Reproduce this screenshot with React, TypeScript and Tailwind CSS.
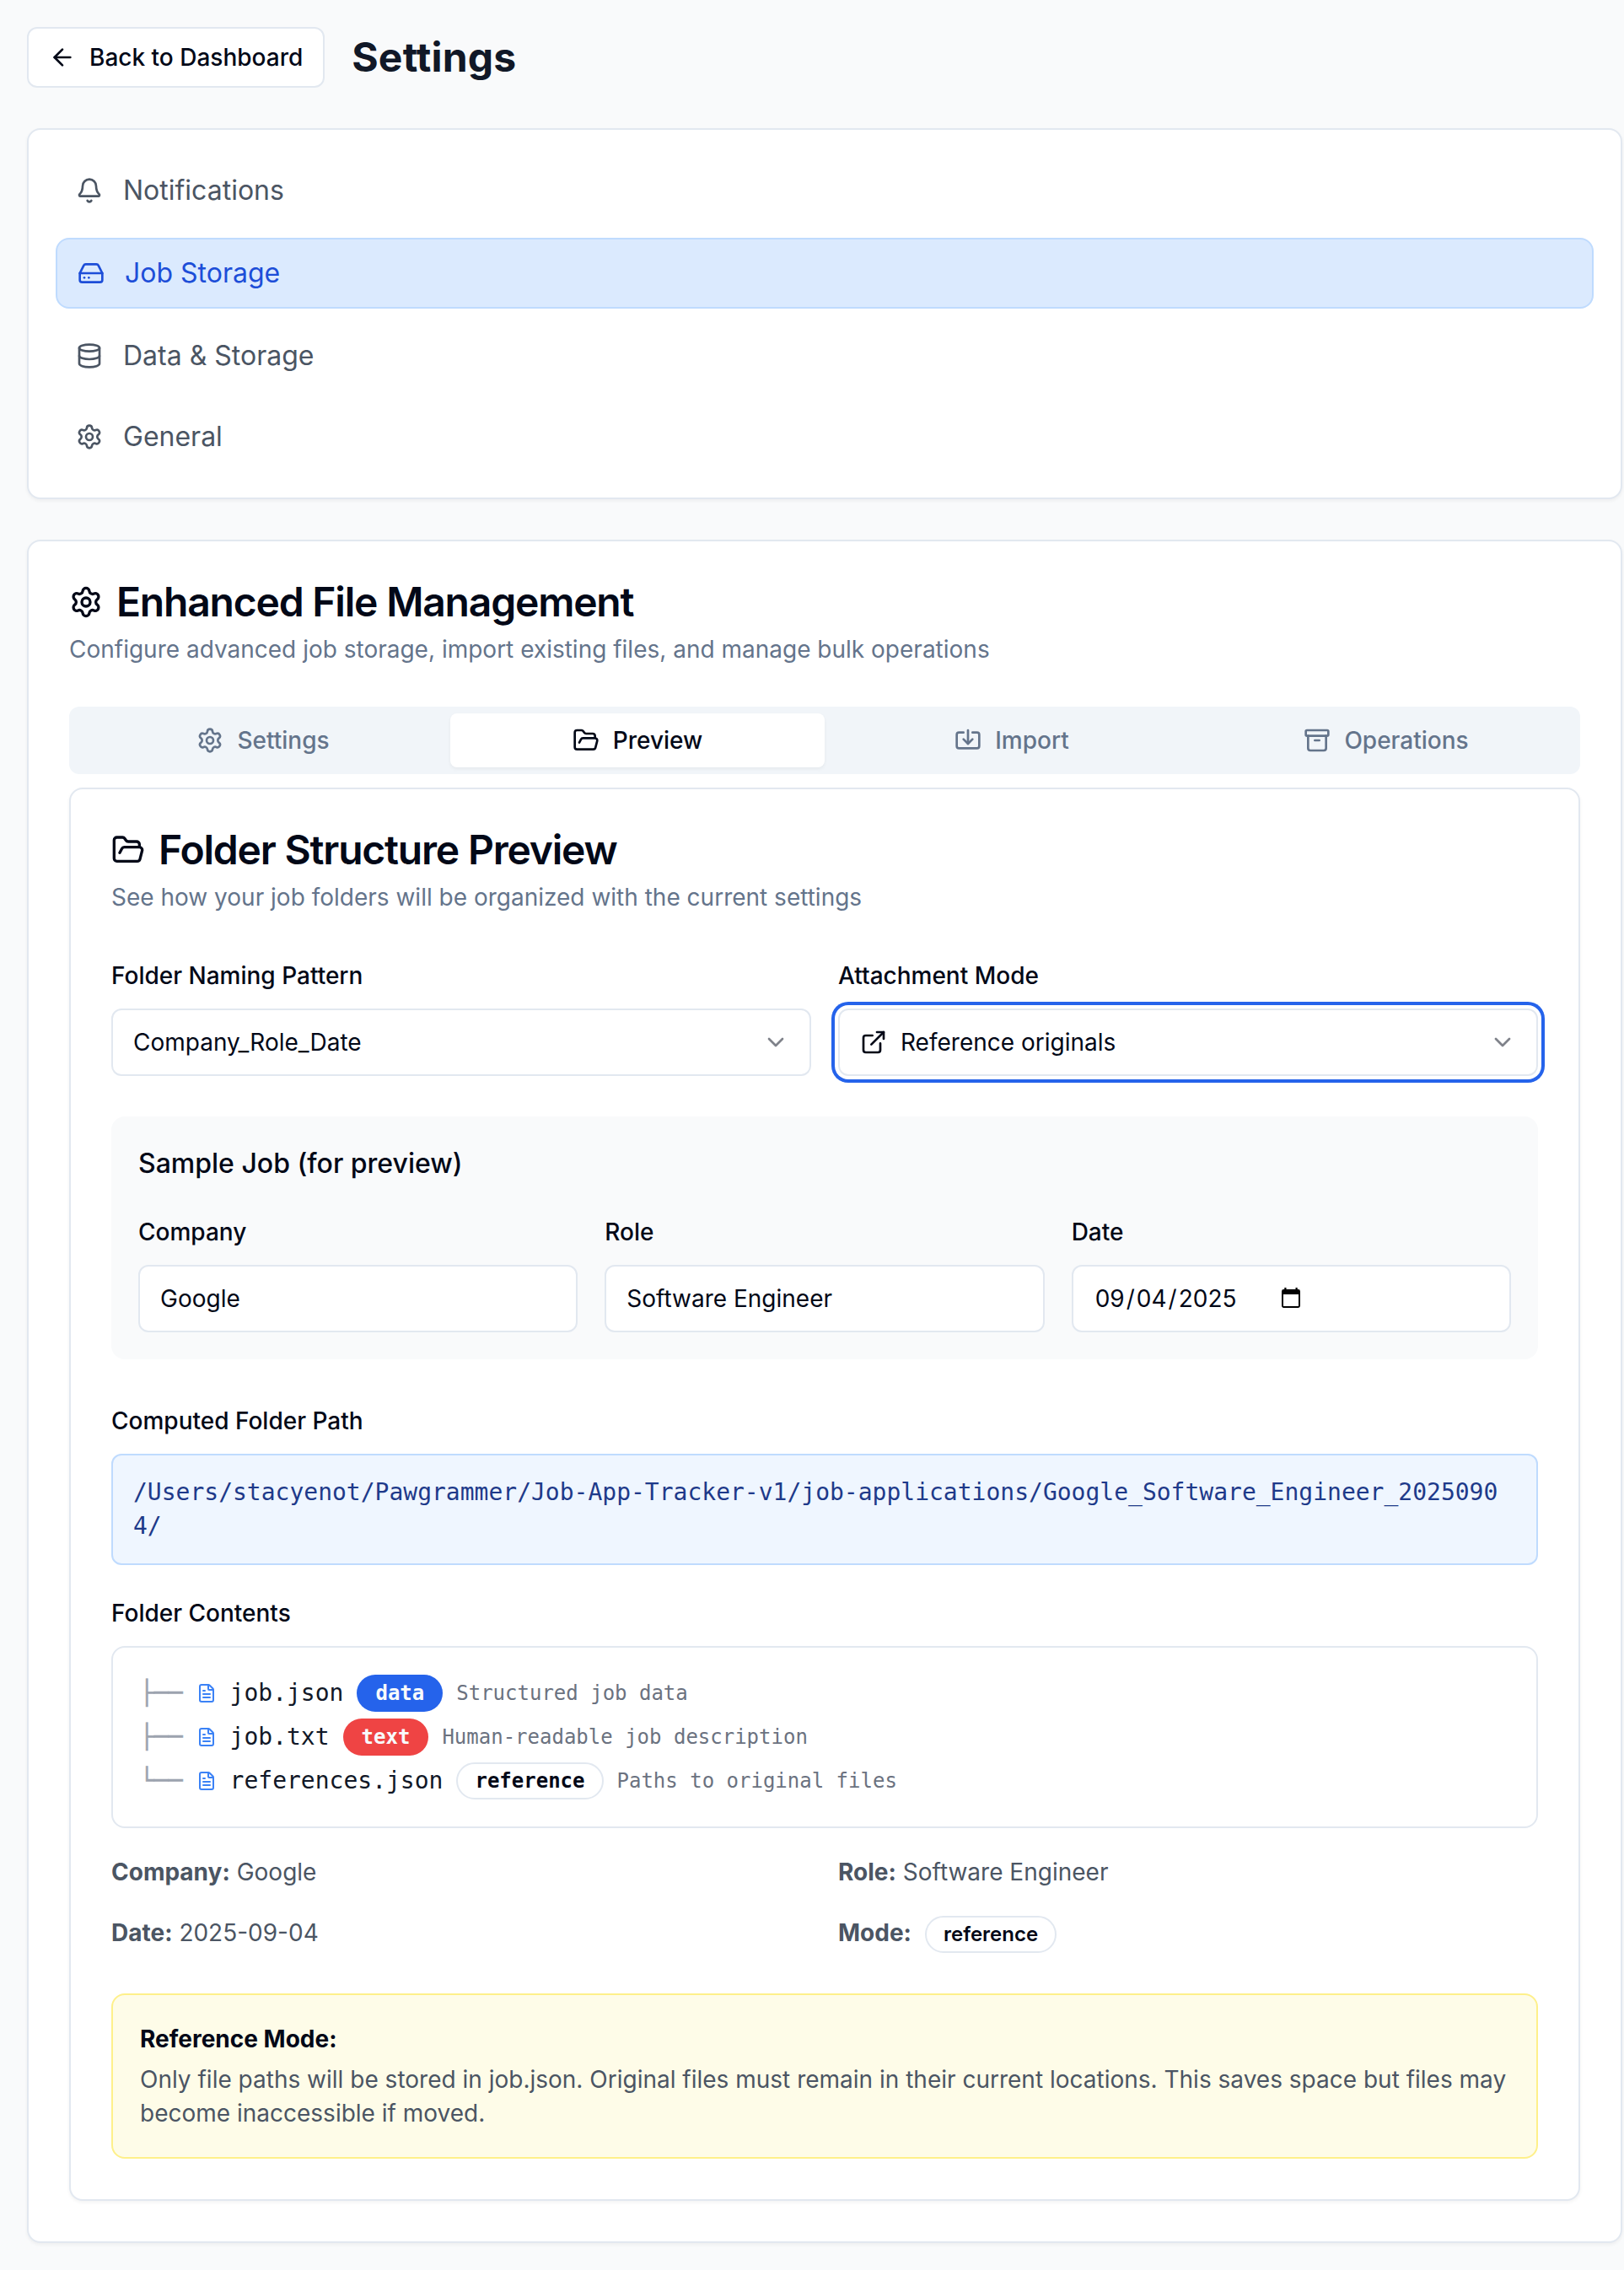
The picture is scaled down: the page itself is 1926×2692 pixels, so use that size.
import type { ReactNode } from 'react';
import {
  Archive,
  ArrowLeft,
  Bell,
  ChevronDown,
  Database,
  ExternalLink,
  FileText,
  FolderOpen,
  HardDrive,
  Import,
  Settings,
} from 'lucide-react';

const NAV = [
  { label: 'Notifications', icon: Bell },
  { label: 'Job Storage', icon: HardDrive, active: true },
  { label: 'Data & Storage', icon: Database },
  { label: 'General', icon: Settings },
];

const TABS = [
  { label: 'Settings', icon: Settings },
  { label: 'Preview', icon: FolderOpen, active: true },
  { label: 'Import', icon: Import },
  { label: 'Operations', icon: Archive },
];

const FILES = [
  {
    branch: '├──',
    name: 'job.json',
    tag: 'data',
    tagClass: 'border-transparent bg-[#2563eb] text-[#f8fafc]',
    note: 'Structured job data',
  },
  {
    branch: '├──',
    name: 'job.txt',
    tag: 'text',
    tagClass: 'border-transparent bg-[#ef4444] text-[#f8fafc]',
    note: 'Human-readable job description',
  },
  {
    branch: '└──',
    name: 'references.json',
    tag: 'reference',
    tagClass: 'border-[#e2e8f0] text-[#020817]',
    note: 'Paths to original files',
  },
];

function Label({ children }: { children: ReactNode }) {
  return (
    <div className="mb-4 h-12 text-[32px] leading-[48px]">
      <label className="text-[28px] leading-none font-medium">{children}</label>
    </div>
  );
}

function Badge({ className, children }: { className: string; children: ReactNode }) {
  return (
    <span
      className={
        'inline-flex items-center rounded-full border-2 px-5 py-1 text-2xl leading-8 font-semibold ' + className
      }
    >
      {children}
    </span>
  );
}

function SectionTitle({ icon: Icon, title, note }: { icon: typeof Bell; title: string; note: string }) {
  return (
    <header className="flex flex-col gap-3 p-12">
      <h2 className="flex items-center gap-4 text-5xl leading-none font-semibold tracking-tight">
        <Icon className="size-10" />
        {title}
      </h2>
      <p className="text-[28px] leading-10 text-[#64748b]">{note}</p>
    </header>
  );
}

function SelectBox({ children, focused }: { children: ReactNode; focused?: boolean }) {
  return (
    <button
      className={
        'flex h-20 w-full items-center justify-between rounded-xl border-2 border-[#e2e8f0] bg-white px-6 text-[28px] leading-10 ' +
        (focused ? 'ring-4 ring-[#2563eb] ring-offset-4 ring-offset-white' : '')
      }
    >
      <span className="flex items-center gap-4">{children}</span>
      <ChevronDown className="size-8 opacity-50" />
    </button>
  );
}

function Field({ label, children }: { label: string; children: ReactNode }) {
  return (
    <div>
      <Label>{label}</Label>
      <div className="flex h-20 items-center rounded-xl border-2 border-[#e2e8f0] bg-white px-6 text-[28px] leading-10">
        {children}
      </div>
    </div>
  );
}

function CalendarGlyph() {
  return (
    <svg className="mb-0.5 ml-[52px] h-6 w-[22px]" viewBox="0 0 22 24" fill="none">
      <path d="M4.4 0v3M17.6 0v3" stroke="#000" strokeWidth="2.2" />
      <rect x="1" y="3" width="20" height="20" rx="1.4" stroke="#000" strokeWidth="2" />
      <path d="M1 3h20v5H1z" fill="#000" />
    </svg>
  );
}

export default function App() {
  return (
    <div className="min-h-[2692px] bg-[#f9fafb] py-8 pr-0.5 pl-8 font-['Inter',sans-serif] text-[#020817]">
      <div className="mb-12 flex h-[72px] items-center gap-8">
        <button className="flex h-[72px] items-center gap-4 rounded-xl border-2 border-[#e2e8f0] bg-white px-6 text-[28px] font-medium">
          <ArrowLeft className="size-8" />
          Back to Dashboard
        </button>
        <h1 className="text-5xl leading-[64px] font-bold tracking-[0.2px] text-[#111827]">Settings</h1>
      </div>

      <nav className="mb-12 flex flex-col gap-4 rounded-2xl border-2 border-[#e2e8f0] bg-white p-8 shadow-[0_2px_4px_rgba(0,0,0,0.05)]">
        {NAV.map(({ label, icon: Icon, active }) => (
          <a
            key={label}
            className={
              'flex items-center gap-6 rounded-2xl px-6 py-4 text-[32px] leading-[48px] ' +
              (active ? 'border-2 border-[#bfdbfe] bg-[#dbeafe] text-[#1d4ed8]' : 'text-[#4b5563]')
            }
          >
            <Icon className="size-8" />
            {label}
          </a>
        ))}
      </nav>

      <section className="rounded-2xl border-2 border-[#e2e8f0] bg-white shadow-[0_2px_4px_rgba(0,0,0,0.05)]">
        <SectionTitle
          icon={Settings}
          title="Enhanced File Management"
          note="Configure advanced job storage, import existing files, and manage bulk operations"
        />
        <div className="px-12 pb-12">
          <div className="mb-4 grid h-20 grid-cols-4 rounded-xl bg-[#f1f5f9] p-2 text-[28px] leading-10 font-medium text-[#64748b]">
            {TABS.map(({ label, icon: Icon, active }) => (
              <button
                key={label}
                className={
                  'flex items-center justify-center gap-4 rounded-lg ' +
                  (active ? 'bg-white text-[#020817] shadow-[0_2px_4px_rgba(0,0,0,0.05)]' : '')
                }
              >
                <Icon className="size-8" />
                {label}
              </button>
            ))}
          </div>

          <section className="rounded-2xl border-2 border-[#e2e8f0] bg-white shadow-[0_2px_4px_rgba(0,0,0,0.05)]">
            <SectionTitle
              icon={FolderOpen}
              title="Folder Structure Preview"
              note="See how your job folders will be organized with the current settings"
            />
            <div className="px-12 pb-12">
              <div className="grid grid-cols-2 gap-8">
                <div>
                  <Label>Folder Naming Pattern</Label>
                  <SelectBox>Company_Role_Date</SelectBox>
                </div>
                <div>
                  <Label>Attachment Mode</Label>
                  <SelectBox focused>
                    <ExternalLink className="size-8" />
                    Reference originals
                  </SelectBox>
                </div>
              </div>

              <div className="mt-12 rounded-2xl bg-[#f9fafb] p-8">
                <h4 className="mb-8 text-[32px] leading-[48px] font-medium">Sample Job (for preview)</h4>
                <div className="grid grid-cols-3 gap-8">
                  <Field label="Company">Google</Field>
                  <Field label="Role">Software Engineer</Field>
                  <Field label="Date">
                    <span>
                      <span className="px-0.5">09</span>/<span className="px-0.5">04</span>/
                      <span className="px-0.5">2025</span>
                    </span>
                    <CalendarGlyph />
                  </Field>
                </div>
              </div>

              <div className="mt-12">
                <Label>Computed Folder Path</Label>
                <div className="rounded-xl border-2 border-[#bfdbfe] bg-[#eff6ff] p-6 font-['DejaVu_Sans_Mono',monospace] text-[28px] leading-10 break-all text-[#1e3a8a]">
                  /Users/stacyenot/Pawgrammer/Job-App-Tracker-v1/job-applications/Google_Software_Engineer_20250904/
                </div>
              </div>

              <div className="mt-8">
                <Label>Folder Contents</Label>
                <div className="flex flex-col gap-2 rounded-2xl border-2 border-[#e2e8f0] bg-white p-8 font-['DejaVu_Sans_Mono',monospace] text-[28px] leading-10">
                  {FILES.map((f) => (
                    <div key={f.name} className="flex h-11 items-center gap-4">
                      <span className="text-[#9ca3af] [-webkit-text-stroke:0.5px_#9ca3af]">{f.branch}</span>
                      <FileText className="size-6 text-[#3b82f6]" />
                      <span className="text-[#111827]">{f.name}</span>
                      <Badge className={f.tagClass}>{f.tag}</Badge>
                      <span className="text-2xl leading-8 text-[#6b7280]">{f.note}</span>
                    </div>
                  ))}
                </div>
              </div>

              <div className="mt-8 grid grid-cols-2 gap-8 text-[28px] leading-10 text-[#4b5563]">
                <div>
                  <strong>Company:</strong> Google
                </div>
                <div>
                  <strong>Role:</strong> Software Engineer
                </div>
                <div>
                  <strong>Date:</strong> 2025-09-04
                </div>
                <div className="flex h-11 items-start">
                  <strong>Mode:</strong>
                  <Badge className="ml-4 border-[#e2e8f0] text-[#020817]">reference</Badge>
                </div>
              </div>

              <div className="mt-12 rounded-2xl border-2 border-[#fef08a] bg-[#fefce8] p-8 text-[28px] leading-10">
                <strong className="mb-2 block">Reference Mode:</strong>
                <p className="text-[#4b5563]">
                  Only file paths will be stored in job.json. Original files must remain in their current locations.
                  This saves space but files may become inaccessible if moved.
                </p>
              </div>
            </div>
          </section>
        </div>
      </section>
    </div>
  );
}
